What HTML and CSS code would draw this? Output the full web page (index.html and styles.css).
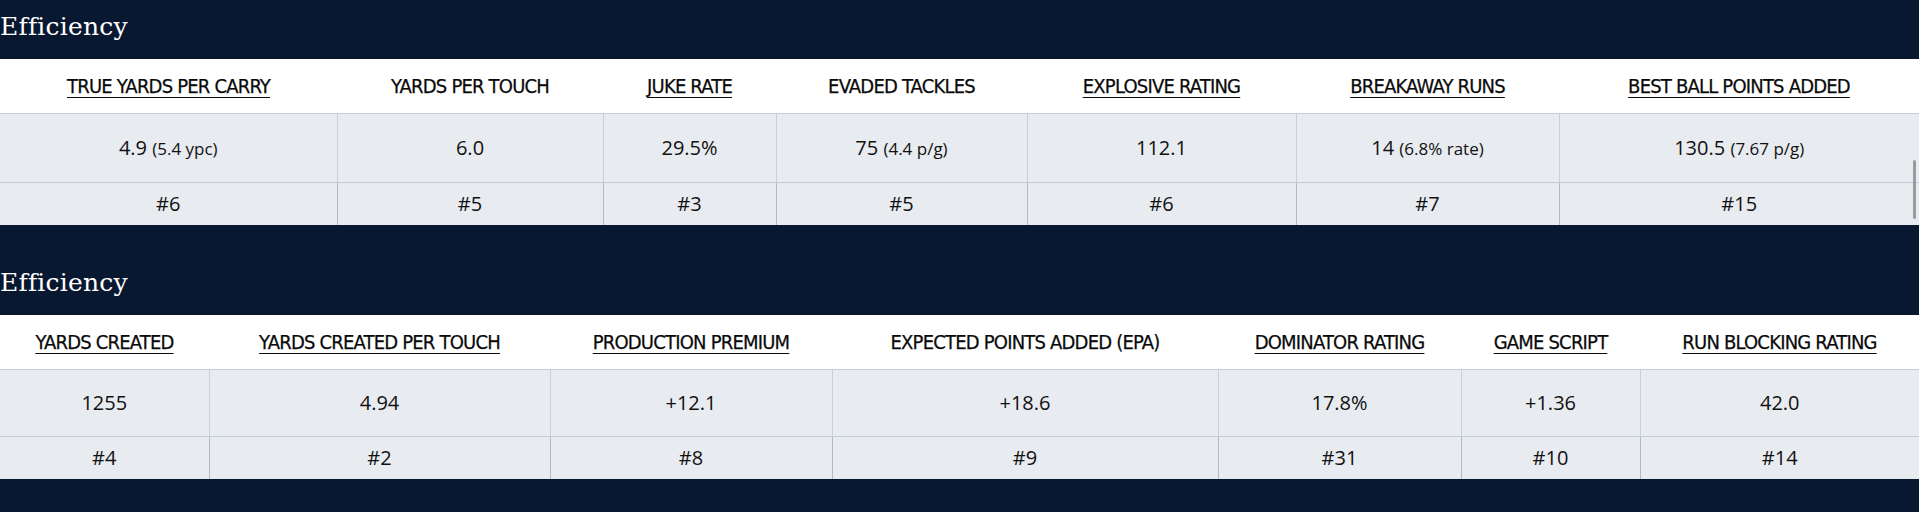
FILE: index.html
```html
<!DOCTYPE html>
<html lang="en">
<head>
<meta charset="utf-8">
<title>Efficiency</title>
<link rel="stylesheet" href="styles.css">
</head>
<body>
<main class="page">
  <section class="stat-section">
    <h2 class="section-title">Efficiency</h2>
    <table class="stats stats--one">
      <colgroup>
        <col><col><col><col><col><col><col>
      </colgroup>
      <thead>
        <tr>
          <th><a class="stat-link" href="#">TRUE YARDS PER CARRY</a></th>
          <th><span class="stat-label">YARDS PER TOUCH</span></th>
          <th><a class="stat-link" href="#">JUKE RATE</a></th>
          <th><span class="stat-label">EVADED TACKLES</span></th>
          <th><a class="stat-link" href="#">EXPLOSIVE RATING</a></th>
          <th><a class="stat-link" href="#">BREAKAWAY RUNS</a></th>
          <th><a class="stat-link" href="#">BEST BALL POINTS ADDED</a></th>
        </tr>
      </thead>
      <tbody>
        <tr class="values">
          <td>4.9 <small>(5.4 ypc)</small></td>
          <td>6.0</td>
          <td>29.5%</td>
          <td>75 <small>(4.4 p/g)</small></td>
          <td>112.1</td>
          <td>14 <small>(6.8% rate)</small></td>
          <td>130.5 <small>(7.67 p/g)</small></td>
        </tr>
        <tr class="ranks">
          <td>#6</td>
          <td>#5</td>
          <td>#3</td>
          <td>#5</td>
          <td>#6</td>
          <td>#7</td>
          <td>#15</td>
        </tr>
      </tbody>
    </table>
  </section>

  <section class="stat-section">
    <h2 class="section-title">Efficiency</h2>
    <table class="stats stats--two">
      <colgroup>
        <col><col><col><col><col><col><col>
      </colgroup>
      <thead>
        <tr>
          <th><a class="stat-link" href="#">YARDS CREATED</a></th>
          <th><a class="stat-link" href="#">YARDS CREATED PER TOUCH</a></th>
          <th><a class="stat-link" href="#">PRODUCTION PREMIUM</a></th>
          <th><span class="stat-label">EXPECTED POINTS ADDED (EPA)</span></th>
          <th><a class="stat-link" href="#">DOMINATOR RATING</a></th>
          <th><a class="stat-link" href="#">GAME SCRIPT</a></th>
          <th><a class="stat-link" href="#">RUN BLOCKING RATING</a></th>
        </tr>
      </thead>
      <tbody>
        <tr class="values">
          <td>1255</td>
          <td>4.94</td>
          <td>+12.1</td>
          <td>+18.6</td>
          <td>17.8%</td>
          <td>+1.36</td>
          <td>42.0</td>
        </tr>
        <tr class="ranks">
          <td>#4</td>
          <td>#2</td>
          <td>#8</td>
          <td>#9</td>
          <td>#31</td>
          <td>#10</td>
          <td>#14</td>
        </tr>
      </tbody>
    </table>
  </section>
</main>
<div class="scroll-thumb"></div>
</body>
</html>
```

FILE: styles.css
```css
html, body {
  margin: 0;
  padding: 0;
  background: #071830;
}

body {
  width: 1919px;
  height: 512px;
  overflow: hidden;
  font-family: "Open Sans", "Noto Sans", sans-serif;
  color: #111;
}

.page {
  display: flex;
  flex-direction: column;
  gap: 31px;
}

.section-title {
  margin: 0;
  height: 59px;
  box-sizing: border-box;
  padding-top: 12px;
  font-family: "DejaVu Serif", "Liberation Serif", serif;
  font-weight: normal;
  font-size: 25px;
  line-height: 29px;
  letter-spacing: 0.2px;
  color: #ffffff;
}

.stats {
  width: 1919px;
  table-layout: fixed;
  border-collapse: collapse;
  border-spacing: 0;
}

.stats--one col:nth-child(1) { width: 337px; }
.stats--one col:nth-child(2) { width: 266px; }
.stats--one col:nth-child(3) { width: 173px; }
.stats--one col:nth-child(4) { width: 251px; }
.stats--one col:nth-child(5) { width: 269px; }
.stats--one col:nth-child(6) { width: 263px; }
.stats--one col:nth-child(7) { width: 360px; }

.stats--two col:nth-child(1) { width: 209px; }
.stats--two col:nth-child(2) { width: 341px; }
.stats--two col:nth-child(3) { width: 282px; }
.stats--two col:nth-child(4) { width: 386px; }
.stats--two col:nth-child(5) { width: 243px; }
.stats--two col:nth-child(6) { width: 179px; }
.stats--two col:nth-child(7) { width: 279px; }

.stats th {
  height: 54px;
  padding: 0;
  box-sizing: border-box;
  background: #ffffff;
  border-bottom: 1px solid #c4ccd8;
  font-family: "DejaVu Sans Condensed", "DejaVu Sans", sans-serif;
  font-stretch: condensed;
  font-weight: normal;
  font-size: 20px;
  line-height: 24px;
  letter-spacing: -0.8px;
  color: #0a0a0a;
  text-align: center;
  vertical-align: middle;
}

.stat-link,
.stat-label {
  color: #0a0a0a;
  text-decoration: none;
  -webkit-text-stroke: 0.25px #0a0a0a;
}

.stat-link {
  text-decoration: underline;
  text-decoration-thickness: 1px;
  text-underline-offset: 4px;
}

.stats td {
  padding: 0;
  background: #e8ebf0;
  text-align: center;
  vertical-align: middle;
  font-size: 20px;
  line-height: 27px;
  color: #111;
}

.stats td + td {
  border-left: 1px solid #c7cfdb;
}

.values td {
  height: 67px;
  box-sizing: border-box;
}

.stats--one .values td {
  height: 69px;
}

.values td small {
  font-size: 17px;
}

.ranks td {
  height: 43px;
  box-sizing: border-box;
  border-top: 1px solid #c4ccd8;
  line-height: 24px;
  padding-top: 1px;
}

.ranks td + td {
  border-left-color: #aebbcf;
}

.scroll-thumb {
  position: absolute;
  left: 1913px;
  top: 160px;
  width: 3px;
  height: 59px;
  border-radius: 2px;
  background: #9b9b9b;
}
```
